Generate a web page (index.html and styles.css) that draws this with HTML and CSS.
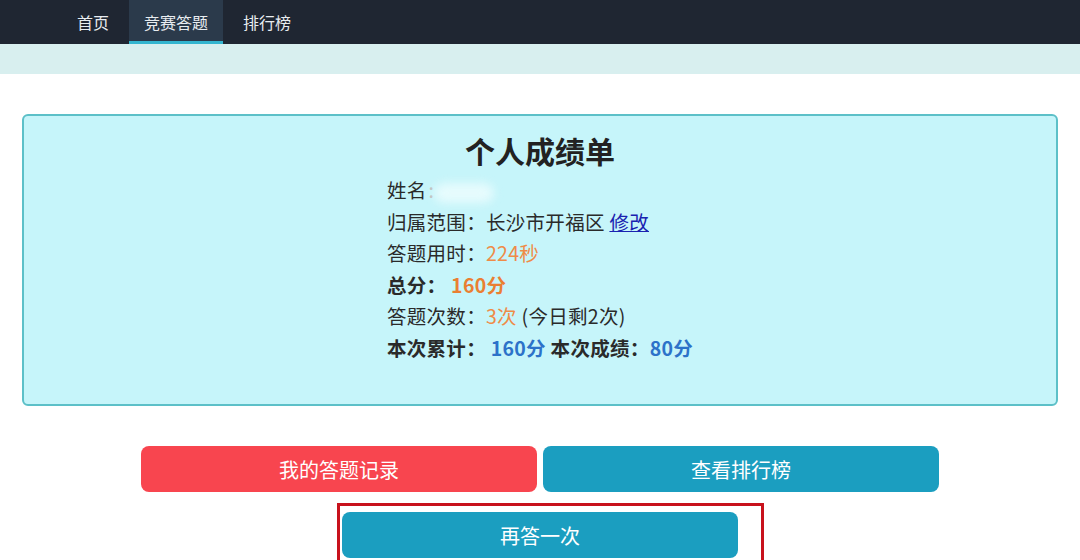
FILE: index.html
```html
<!DOCTYPE html>
<html lang="zh-CN">
<head>
  <meta charset="UTF-8" />
  <title>个人成绩单</title>
  <link rel="stylesheet" href="styles.css">
</head>
<body>
  <div class="topbar">
    <a class="nav-item">首页</a>
    <a class="nav-item active">竞赛答题</a>
    <a class="nav-item">排行榜</a>
  </div>
  <div class="strip"></div>

  <div class="card">
    <h2 class="card-title">个人成绩单</h2>
    <div class="info">
      <p>姓名<span class="colon">:</span><span class="name-mask"></span></p>
      <p>归属范围：长沙市开福区 <a class="edit" href="#">修改</a></p>
      <p>答题用时：<span class="orange">224秒</span></p>
      <p class="bold">总分：&nbsp;<span class="orange">160分</span></p>
      <p>答题次数：<span class="orange">3次</span> (今日剩2次)</p>
      <p class="bold">本次累计：&nbsp;<span class="blue">160分</span> 本次成绩：<span class="blue">80分</span></p>
    </div>
  </div>

  <div class="actions">
    <button class="btn red">我的答题记录</button>
    <button class="btn teal">查看排行榜</button>
  </div>
  <div class="again-row">
    <button class="btn teal">再答一次</button>
    <div class="mark"></div>
  </div>
</body>
</html>
```

FILE: styles.css
```css
body {
  margin: 0;
  background: #fff;
  font-family: "Noto Sans CJK SC", "Noto Sans", sans-serif;
  color: #222;
  width: 1080px;
  height: 560px;
  overflow: hidden;
}

.topbar {
  height: 44px;
  background: #1f2632;
  display: flex;
  padding-left: 61px;
}

.nav-item {
  color: #e8ecf0;
  font-size: 16px;
  line-height: 44px;
  padding: 0 16px;
  box-sizing: border-box;
  height: 44px;
}

.nav-item.active {
  background: #2b3a4b;
  border-bottom: 3px solid #33b5cf;
  line-height: 44px;
  padding: 0 15px;
  margin: 0 4px;
}

.strip {
  height: 30px;
  background: #d8efef;
}

.card {
  margin: 40px 22px 0;
  height: 292px;
  box-sizing: border-box;
  background: #c6f5fa;
  border: 2px solid #5cc0c8;
  border-radius: 6px;
  text-align: center;
}

.card-title {
  margin: 14px 0 0;
  font-size: 30px;
  line-height: 40px;
  font-weight: bold;
  color: #222;
}

.info {
  display: inline-block;
  text-align: left;
  margin-top: 4px;
}

.info p {
  margin: 0;
  font-size: 19.5px;
  letter-spacing: 0.3px;
  line-height: 31.6px;
  color: #2a2a2a;
}

.info .bold {
  font-weight: bold;
}

.colon {
  color: #bbb;
  margin-left: 2px;
}

.name-mask {
  display: inline-block;
  width: 60px;
  height: 20px;
  vertical-align: middle;
  background: #e6fbfd;
  border-radius: 10px;
  filter: blur(5px);
}

.edit {
  color: #1a22b0;
  text-decoration: underline;
}

.orange {
  color: #ef8b47;
}

.bold .orange {
  color: #ea7f32;
}

.blue {
  color: #2c72c9;
}

.actions {
  display: flex;
  justify-content: center;
  gap: 6px;
  margin-top: 40px;
}

.btn {
  width: 396px;
  height: 46px;
  border: none;
  border-radius: 8px;
  color: #fff;
  font-family: "Noto Sans CJK SC", sans-serif;
  font-size: 20px;
}

.red {
  background: #f8454f;
}

.teal {
  background: #1b9ec0;
}

.again-row {
  position: relative;
  display: flex;
  justify-content: center;
  margin-top: 20px;
}

/* red outline drawn over the retry button */
.mark {
  position: absolute;
  left: 337px;
  top: -9px;
  width: 427px;
  height: 60px;
  box-sizing: border-box;
  border: 3px solid #c8121c;
}
```
